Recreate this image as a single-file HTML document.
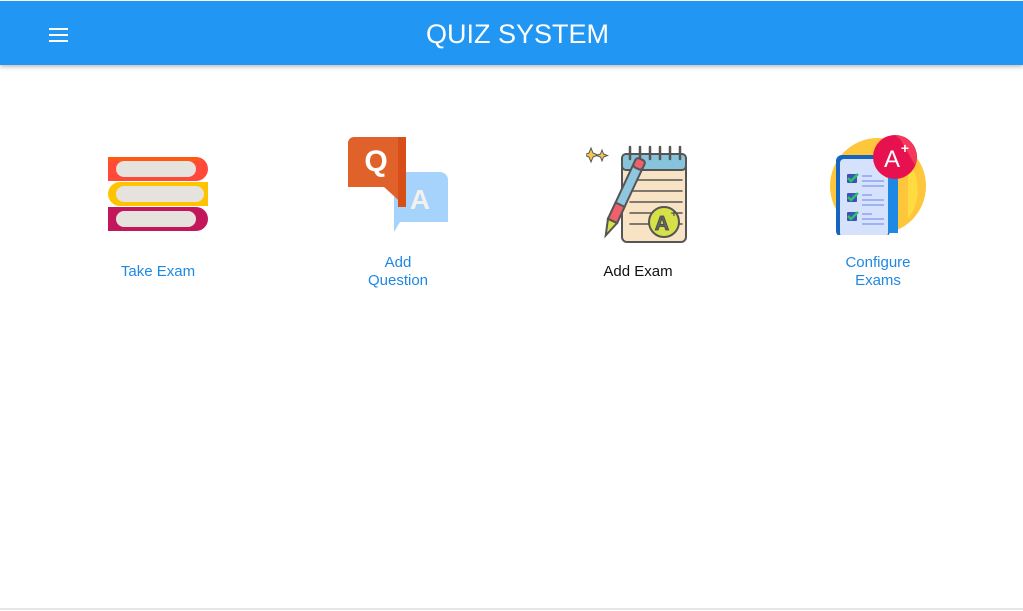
<!DOCTYPE html>
<html><head><style>
*{margin:0;padding:0;box-sizing:border-box}
body{width:1023px;height:611px;background:#fff;font-family:"Liberation Sans",sans-serif;position:relative;overflow:hidden}
.hdr{position:absolute;left:0;top:1px;width:1023px;height:64px;background:#2196F3;box-shadow:0 2px 4px rgba(0,0,0,.25)}
.hdr h1{position:absolute;left:0;right:0;top:18px;text-align:center;color:#fff;font-weight:normal;font-size:27px;letter-spacing:0;padding-left:12px}
.menu{position:absolute;left:49px;top:27px;width:19px}
.menu i{display:block;height:2px;background:#fff;margin-bottom:4px}
.lbl{position:absolute;width:200px;text-align:center;font-size:15px;line-height:18px;color:#1e88e5}
svg{position:absolute}
.foot{position:absolute;left:0;top:608px;width:1023px;height:2px;background:#e6e6e6}
</style></head><body>
<div class="hdr"><div class="menu"><i></i><i></i><i></i></div><h1>QUIZ SYSTEM</h1></div>

<svg style="left:108px;top:157px" width="100" height="75" viewBox="0 0 100 75">
<path d="M0 0H88a12 12 0 0 1 0 24H0z" fill="#ff4a3a"/><path d="M0 0H88a12 12 0 0 1 6 4H0z" fill="#ff5a10"/>
<rect x="8" y="4" width="80" height="16" rx="8" fill="#e6e2de"/>
<path d="M12 25H100V49H12a12 12 0 0 1 0-24z" fill="#ffc400"/>
<rect x="8" y="29" width="88" height="16" rx="8" fill="#e6e2de"/>
<path d="M0 50H88a12 12 0 0 1 0 24H0z" fill="#c2185b"/>
<rect x="8" y="54" width="80" height="16" rx="8" fill="#e6e2de"/>
</svg>

<svg style="left:348px;top:137px" width="100" height="96" viewBox="0 0 100 96">
<path d="M46 35H92a8 8 0 0 1 8 8V85H52L46 95z" fill="#a5d3fb"/>
<text x="72" y="72" font-size="28" font-weight="bold" fill="#f3f1ee" text-anchor="middle" font-family="Liberation Sans">A</text>
<path d="M0 6a6 6 0 0 1 6-6H58V70L36 50H0z" fill="#e0622a"/>
<rect x="50" y="0" width="8" height="70" fill="#d84e18"/>
<text x="28" y="34" font-size="30" font-weight="bold" fill="#fff" text-anchor="middle" font-family="Liberation Sans">Q</text>
</svg>

<svg style="left:586px;top:142px" width="104" height="103" viewBox="0 0 104 103">
<g fill="#f5c84c" stroke="#555" stroke-width="1"><path d="M5 6l2 5 5 2-5 2-2 5-2-5-5-2 5-2z"/><path d="M16 8l1.5 4 4 1.5-4 1.5-1.5 4-1.5-4-4-1.5 4-1.5z"/></g>
<rect x="36" y="12" width="64" height="88" rx="5" fill="#f9e3c5" stroke="#555" stroke-width="2"/>
<rect x="36" y="12" width="64" height="16" rx="4" fill="#87c4dc" stroke="#555" stroke-width="2"/>
<g stroke="#555" stroke-width="2.5" stroke-linecap="round"><path d="M44 5v12M54 5v12M64 5v12M74 5v12M84 5v12M94 5v12"/>
<path d="M44 38H96M44 49H96M44 60H96M44 71H96M44 82H96" stroke-width="1.5"/></g>
<circle cx="78" cy="80" r="15" fill="#d6e048" stroke="#555" stroke-width="2"/>
<text x="76" y="88" font-size="20" font-weight="bold" fill="#666" stroke="#444" stroke-width=".8" text-anchor="middle" font-family="Liberation Sans">A</text>
<text x="88" y="75" font-size="11" font-weight="bold" fill="#555" text-anchor="middle">+</text>
<g transform="rotate(25 40 50)"><rect x="35" y="14" width="10" height="70" rx="3" fill="#8fc6e0" stroke="#555" stroke-width="2"/><rect x="35" y="14" width="10" height="10" rx="3" fill="#f0606b" stroke="#555" stroke-width="2"/><rect x="35" y="64" width="10" height="18" fill="#f0606b" stroke="#555" stroke-width="2"/><path d="M35 82L40 98 45 82z" fill="#d6e048" stroke="#555" stroke-width="2"/></g>
</svg>

<svg style="left:828px;top:133px" width="100" height="102" viewBox="0 0 100 102">
<circle cx="50" cy="53" r="48" fill="#fec63a"/>
<path d="M80 28a48 48 0 0 1 0 58z" fill="#fedb40"/>
<rect x="8" y="22" width="54" height="82" rx="6" fill="#1565c0"/>
<rect x="12" y="26" width="48" height="78" rx="4" fill="#d6e2fb"/>
<rect x="60" y="30" width="10" height="70" fill="#1e88e5"/>
<g fill="#3f51b5"><rect x="19" y="41" width="10" height="9" rx="1"/><rect x="19" y="60" width="10" height="9" rx="1"/><rect x="19" y="79" width="10" height="9" rx="1"/></g>
<g stroke="#28c26a" stroke-width="2.5" fill="none"><path d="M20 45l3 3 7-7M20 64l3 3 7-7M20 83l3 3 7-7"/></g>
<g stroke="#9fb3f3" stroke-width="2"><path d="M34 43h10M34 48h22M34 53h22M34 62h10M34 67h22M34 72h22M34 81h10M34 86h22M34 91h22"/></g>
<circle cx="67" cy="24" r="22" fill="#e8114f"/>
<path d="M67 2a22 22 0 0 1 20 30L72 6z" fill="#f3385a"/>
<text x="64" y="34" font-size="24" fill="#fff" text-anchor="middle" font-family="Liberation Sans">A</text>
<text x="77" y="20" font-size="14" font-weight="bold" fill="#fff" text-anchor="middle">+</text>
</svg>

<div class="lbl" style="left:58px;top:263px">Take Exam</div>
<div class="lbl" style="left:298px;top:254px">Add<br>Question</div>
<div class="lbl" style="left:538px;top:263px;color:#111">Add Exam</div>
<div class="lbl" style="left:778px;top:254px">Configure<br>Exams</div>
<div class="foot"></div>
</body></html>
